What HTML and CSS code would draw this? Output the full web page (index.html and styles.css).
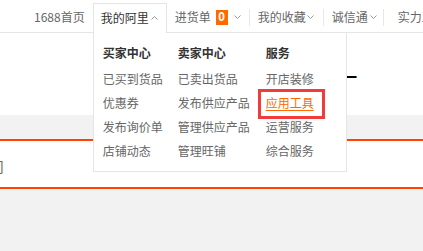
FILE: index.html
```html
<!DOCTYPE html>
<html lang="zh-CN">
<head>
<meta charset="utf-8">
<title>1688</title>
<link rel="stylesheet" href="styles.css">
</head>
<body>
<div class="topbar">
  <nav class="nav">
    <a class="item home">1688首页</a>
    <div class="item tab">
      <span>我的阿里</span>
      <svg class="chev up" width="7" height="4" viewBox="0 0 7 4"><polyline points="0.5,3.5 3.5,0.5 6.5,3.5"/></svg>
      <div class="dropdown">
        <div class="grid">
          <div class="head">买家中心</div>
          <div class="head">卖家中心</div>
          <div class="head">服务</div>
          <a class="link">已买到货品</a>
          <a class="link">已卖出货品</a>
          <a class="link">开店装修</a>
          <a class="link">优惠券</a>
          <a class="link">发布供应产品</a>
          <a class="link hot">应用工具</a>
          <a class="link">发布询价单</a>
          <a class="link">管理供应产品</a>
          <a class="link">运营服务</a>
          <a class="link">店铺动态</a>
          <a class="link">管理旺铺</a>
          <a class="link">综合服务</a>
        </div>
        <div class="mark"></div>
      </div>
    </div>
    <div class="item cart">
      <span>进货单</span>
      <span class="badge">0</span>
      <svg class="chev" width="7" height="4" viewBox="0 0 7 4"><polyline points="0.5,0.5 3.5,3.5 6.5,0.5"/></svg>
    </div>
    <span class="sep"></span>
    <div class="item fav">
      <span>我的收藏</span>
      <svg class="chev" width="7" height="4" viewBox="0 0 7 4"><polyline points="0.5,0.5 3.5,3.5 6.5,0.5"/></svg>
    </div>
    <span class="sep"></span>
    <div class="item trust">
      <span>诚信通</span>
      <svg class="chev" width="7" height="4" viewBox="0 0 7 4"><polyline points="0.5,0.5 3.5,3.5 6.5,0.5"/></svg>
    </div>
    <span class="sep"></span>
    <div class="item factory"><span>实力工厂</span></div>
  </nav>
</div>
<div class="hero"><div class="dash"></div></div>
<div class="band"></div>
<div class="strip"><span class="cut">司</span></div>
<div class="rest"></div>
</body>
</html>
```

FILE: styles.css
```css
* { box-sizing: border-box; }
html, body { margin: 0; padding: 0; }
body {
  width: 423px;
  height: 251px;
  overflow: hidden;
  background: #f2f2f2;
  font-family: "Noto Sans CJK SC", "Liberation Sans", sans-serif;
  font-size: 12px;
  line-height: 1;
  color: #666;
}
a { text-decoration: none; color: inherit; }

.topbar {
  height: 33px;
  background: #fff;
  border-bottom: 1px solid #e5e5e5;
}
.nav {
  display: flex;
  align-items: center;
  height: 32px;
  padding: 2px 0 0 26px;
  white-space: nowrap;
}
.item {
  display: flex;
  align-items: center;
  height: 100%;
  color: #666;
  line-height: 14px;
}
.home { padding: 0 8px; color: #666; }
.tab {
  position: relative;
  align-self: flex-start;
  margin-top: 1px;
  height: 30px;
  padding: 0 8px 2px 7px;
  background: #fff;
  border: 1px solid #e5e5e5;
  border-bottom: none;
  color: #333;
}
.tab::after {
  content: "";
  position: absolute;
  left: 0;
  right: 0;
  bottom: -1px;
  height: 2px;
  background: #fff;
  z-index: 3;
}
.chev { display: block; margin-left: 2px; }
.chev polyline { fill: none; stroke: #999; stroke-width: 1; }
.tab .chev { margin-left: 2px; }
.cart { padding: 0 8px 0 8px; }
.badge {
  display: flex;
  align-items: center;
  justify-content: center;
  width: 12px;
  height: 15px;
  margin: 0 6px 0 5px;
  background: #ff6a00;
  color: #fff;
  font-size: 12px;
  font-weight: bold;
  font-family: "Liberation Sans", sans-serif;
}
.cart .chev { margin-left: 0; }
.sep {
  display: block;
  width: 1px;
  height: 17px;
  background: #e8e8e8;
  flex: none;
}
.fav { padding: 0 9px 0 8px; }
.fav .chev { margin-left: 1px; }
.trust { padding: 0 6px 0 8px; }
.trust .chev { margin-left: 2px; }
.factory { padding: 0 0 0 14px; }

.dropdown {
  position: absolute;
  left: -1px;
  top: 28px;
  width: 254px;
  height: 140px;
  background: #fff;
  border: 1px solid #e5e5e5;
  padding: 8px 0 0 9px;
  z-index: 1;
}
.grid {
  display: grid;
  grid-template-columns: 75px 88px auto;
  grid-template-rows: 26px repeat(4, 24px);
}
.head {
  font-weight: bold;
  color: #333;
  line-height: 24px;
}
.link {
  color: #666;
  line-height: 24px;
}
.link.hot {
  color: #ff6a00;
  text-decoration: underline;
  text-underline-offset: 2px;
}
.mark {
  position: absolute;
  left: 164px;
  top: 56px;
  width: 67px;
  height: 30px;
  border: 3px solid #f23c3c;
  pointer-events: none;
}

.hero {
  height: 82px;
  background: #fff;
  padding-top: 43px;
}
.dash {
  width: 10px;
  height: 2px;
  margin-left: 347px;
  background: #000;
  border-right: 1px solid #2a7de1;
}
.band {
  height: 26px;
  background: #f2f2f2;
  border-bottom: 2px solid #ff4400;
}
.strip {
  height: 48px;
  background: #fff;
  border-bottom: 2px solid #ff4400;
  padding-top: 18px;
}
.cut {
  display: block;
  margin-left: -10px;
  font-size: 14px;
  line-height: 14px;
  color: #666;
}
.rest { height: 62px; background: #f2f2f2; }
```
